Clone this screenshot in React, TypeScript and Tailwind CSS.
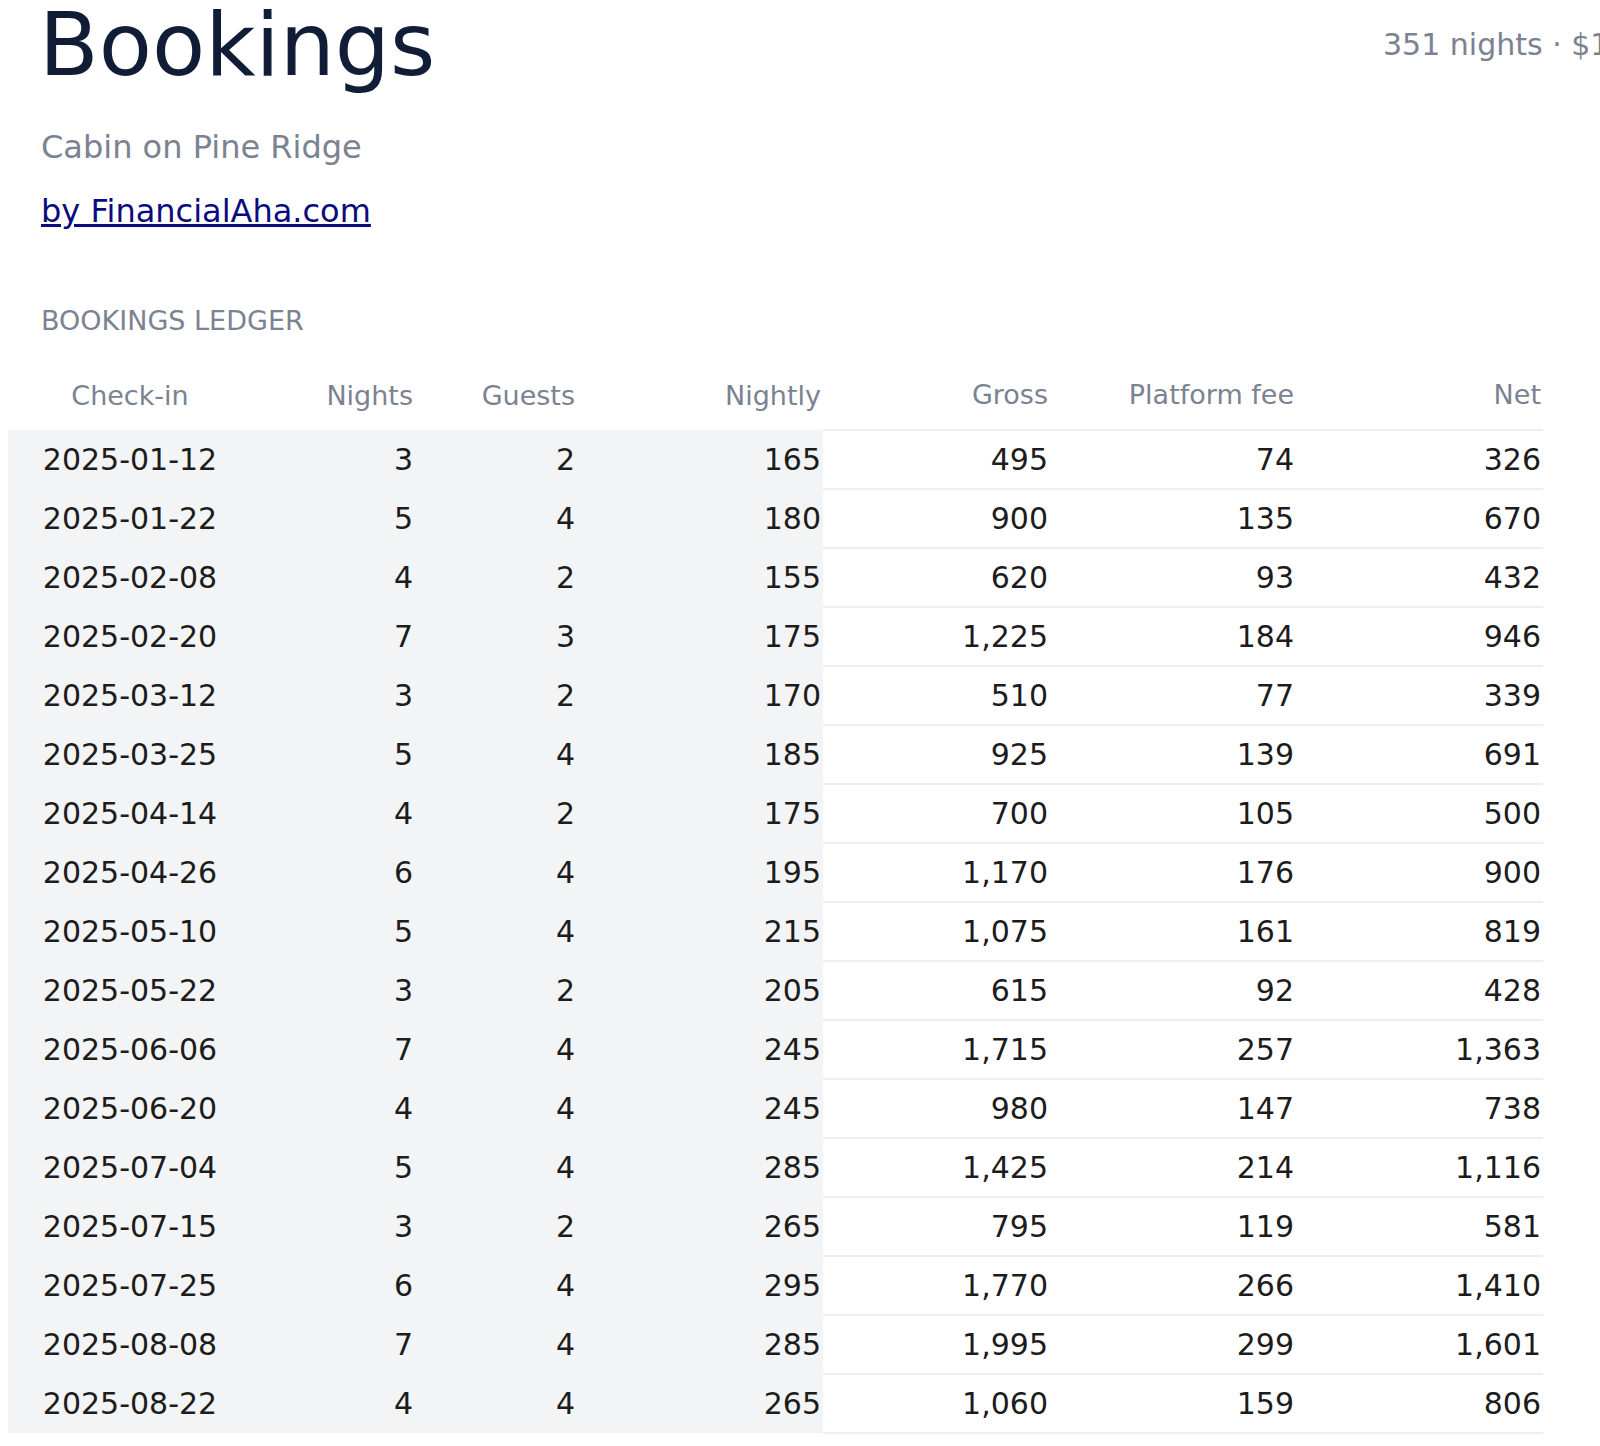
const rows: string[][] = [
["2025-01-12","3","2","165","495","74","326"],
["2025-01-22","5","4","180","900","135","670"],
["2025-02-08","4","2","155","620","93","432"],
["2025-02-20","7","3","175","1,225","184","946"],
["2025-03-12","3","2","170","510","77","339"],
["2025-03-25","5","4","185","925","139","691"],
["2025-04-14","4","2","175","700","105","500"],
["2025-04-26","6","4","195","1,170","176","900"],
["2025-05-10","5","4","215","1,075","161","819"],
["2025-05-22","3","2","205","615","92","428"],
["2025-06-06","7","4","245","1,715","257","1,363"],
["2025-06-20","4","4","245","980","147","738"],
["2025-07-04","5","4","285","1,425","214","1,116"],
["2025-07-15","3","2","265","795","119","581"],
["2025-07-25","6","4","295","1,770","266","1,410"],
["2025-08-08","7","4","285","1,995","299","1,601"],
["2025-08-22","4","4","265","1,060","159","806"],
];
const heads = ["Check-in","Nights","Guests","Nightly","Gross","Platform fee","Net"];
const widths = ["w-[246px]","w-[161px]","w-[162px]","w-[246px]","w-[227px]","w-[246px]","w-[247px]"];

export default function App() {
  return (
    <div className="w-[1600px] h-[1446px] overflow-hidden bg-white" style={{ fontFamily: '"DejaVu Sans", sans-serif' }}>
      <div className="flex items-start h-[93px]">
        <h1 className="w-[1342px] shrink-0 pl-[39px] text-[87px] leading-[96px] text-[#111c36] -mt-[3px]">Bookings</h1>
        <span className="shrink-0 whitespace-nowrap text-[30px] leading-[36px] text-[#7b8291] mt-[27px] ml-[41px]">351 nights · $13,666 net</span>
      </div>
      <div className="pl-[41px] mt-[36px] text-[32px] leading-[36px] text-[#7b8291]">Cabin on Pine Ridge</div>
      <div className="pl-[41px] mt-[28px] text-[32px] leading-[36px]"><a href="#" className="underline text-[#0b0b80]">by FinancialAha.com</a></div>
      <div className="pl-[41px] mt-[77px] text-[27px] leading-[30px] text-[#7b8291]">BOOKINGS LEDGER</div>
      <table className="ml-[8px] mt-[26px] border-collapse table-fixed w-[1535px]">
        <thead>
          <tr>
            {heads.map((h, i) => (
              <th key={h} className={`${widths[i]} h-[68px] font-normal text-[27px] text-[#7b8291] pr-[2px] ${i === 0 ? "text-center" : "text-right"} ${i >= 4 ? "border-b-2 border-[#eceef2]" : ""}`}>{h}</th>
            ))}
          </tr>
        </thead>
        <tbody>
          {rows.map((r) => (
            <tr key={r[0]}>
              {r.map((c, i) => (
                <td key={i} className={`h-[59px] text-[30px] text-[#1c1c1c] pr-[2px] ${i === 0 ? "text-center" : "text-right"} ${i < 4 ? "bg-[#f3f4f6]" : "border-b-2 border-[#eceef2]"}`}>{c}</td>
              ))}
            </tr>
          ))}
        </tbody>
      </table>
    </div>
  );
}
